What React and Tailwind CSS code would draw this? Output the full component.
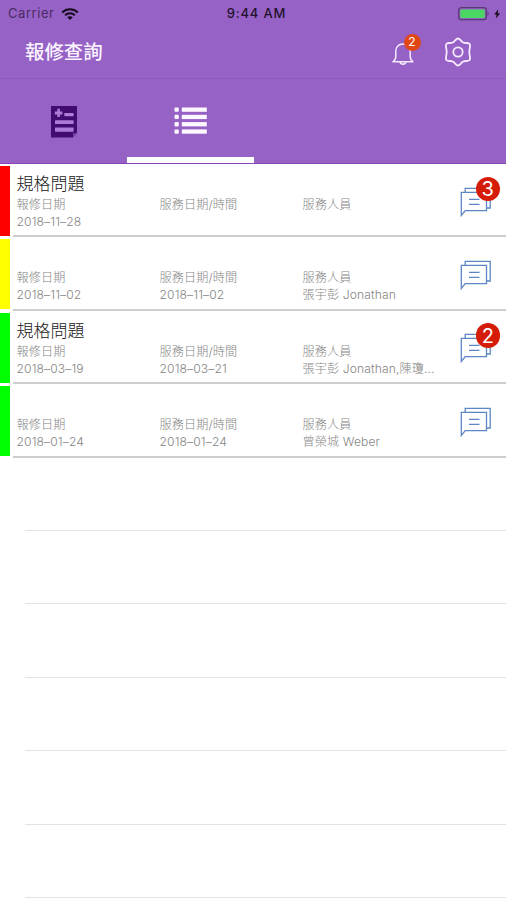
import React from 'react';
import clsx from 'clsx';

const tickets = [
  { color: 'bg-[#ff0000]', title: '規格問題', reported: '2018–11–28', served: '', staff: '', unread: 3 },
  { color: 'bg-[#ffff00]', title: '', reported: '2018–11–02', served: '2018–11–02', staff: '張宇彭 Jonathan', unread: 0 },
  { color: 'bg-[#00ff00]', title: '規格問題', reported: '2018–03–19', served: '2018–03–21', staff: '張宇彭 Jonathan,陳瓊...', unread: 2 },
  { color: 'bg-[#00ff00]', title: '', reported: '2018–01–24', served: '2018–01–24', staff: '曾榮城 Weber', unread: 0 },
];

const emptyRows = [1, 2, 3, 4, 5, 6];

const WifiIcon = () => (
  <svg width="18" height="12" viewBox="0 0 18 12" fill="none" stroke="#150b1e" strokeWidth="2">
    <path d="M1.2 4.4C5.6.3 12.4.3 16.8 4.4" />
    <path d="M4.1 7.3c2.8-2.6 7-2.6 9.8 0" />
    <path d="M6.2 9.3 9 12l2.8-2.7c-1.6-1.4-4-1.4-5.6 0z" fill="#150b1e" stroke="none" />
  </svg>
);

const BatteryIcon = () => (
  <svg width="44" height="14" viewBox="0 0 44 14">
    <rect x=".7" y=".7" width="27.6" height="12" rx="2.6" fill="none" stroke="#583a76" strokeWidth="1.3" />
    <rect x="2.3" y="2.4" width="24.4" height="8.7" rx="1" fill="#4bd763" />
    <path d="M29.5 4.6c1.6.7 1.6 3.6 0 4.3z" fill="#583a76" />
    <path d="M40.3 2.2 36.2 7.5h2.4l-.8 4 4.4-5.3h-2.6z" fill="#150b1e" />
  </svg>
);

const BellIcon = () => (
  <svg width="22" height="26" viewBox="0 0 22 26" fill="none" stroke="#f6e9ff" strokeWidth="1.5" strokeLinejoin="round">
    <path d="M1 21.8h20c-1.9-1.3-2.8-3-2.8-5.5v-5C18.200 7 15.200 4 11 4s-7.200 3-7.200 7.300v5c0 2.500-.9 4.200-2.800 5.500z" />
    <path d="M8.200 22.200c.5 2.800 5.100 2.800 5.600 0" />
  </svg>
);

const GearIcon = () => (
  <svg width="28" height="30" viewBox="0 0 28 30" fill="none" stroke="#f6e9ff" strokeWidth="1.8" strokeLinejoin="round">
    <path d="M14 1.500C16 1.500 17 4.400 19.200 5.500 21.300 6.600 23.700 5.400 25.300 6.600 27.200 8 25.300 11.500 25.300 15S27.200 22 25.300 23.400C23.700 24.600 21.300 23.400 19.200 24.500 17 25.600 16 28.500 14 28.500S11 25.600 8.800 24.500C6.700 23.400 4.300 24.600 2.700 23.400.8 22 2.700 18.500 2.700 15S.8 8 2.700 6.600C4.300 5.400 6.700 6.600 8.800 5.500 11 4.400 12 1.500 14 1.500z" />
    <circle cx="14" cy="15" r="4.700" />
  </svg>
);

const FormIcon = () => (
  <svg width="26" height="32" viewBox="0 0 26 32">
    <path d="M0 0h26v27.500h-4v4H0z" fill="#410b72" />
    <path d="M22 31.500v-4h4z" fill="#7441a2" />
    <g fill="#ad7cd6">
      <path d="M6.300 2.800h2.600v2.800h2.500v2.800H8.900v2.700H6.300V8.400H3.800V5.600h2.500z" />
      <rect x="13.300" y="7" width="9.300" height="3.200" rx=".6" />
      <rect x="4" y="14.200" width="18.600" height="3.800" rx=".6" />
      <rect x="4" y="21.500" width="18.600" height="4.200" rx=".6" />
    </g>
  </svg>
);

const ListIcon = () => (
  <svg width="33" height="28" viewBox="0 0 33 28" fill="#fdf8ff">
    {[0.5, 7.8, 15.1, 22.4].map((y) => (
      <g key={y}>
        <rect x="0.5" y={y} width="4.3" height="4.3" rx="1" />
        <rect x="7.8" y={y} width="25" height="4.3" />
      </g>
    ))}
  </svg>
);

const ChatIcon = () => (
  <svg width="32" height="30" viewBox="0 0 32 30" fill="none" stroke="#5c87c4" strokeWidth="1.3">
    <path d="M5.200 5V1.300h25V21h-3.400" />
    <path d="M1.300 28.500V5.300h25.200v18.400H5.200z" fill="#fff" />
    <path d="M9 12.300h10.500M9 17.300h10.500" />
  </svg>
);

const Field = ({ label, value, className }) => (
  <div className={clsx('h-full pt-[32px] text-[12.1px] leading-[17px] whitespace-nowrap text-[#858585]', className)}>
    <div className="tracking-[0.15px]">{label}</div>
    <div className="tracking-[0.13px]">{value}</div>
  </div>
);

const TicketRow = ({ ticket }) => (
  <li className="flex h-[73.4px]">
    <div className={clsx('mt-[2px] mb-[1.5px] w-[10px] shrink-0', ticket.color)} />
    <div className="relative ml-[3px] flex flex-1 border-b-2 border-[#cdcdcd] pl-[3.5px]">
      <h2 className="absolute top-[8px] left-[3.5px] text-[17px] leading-[24px] text-[#202020]">{ticket.title}</h2>
      <Field className="w-[143px]" label="報修日期" value={ticket.reported} />
      <Field className="w-[143px]" label="服務日期/時間" value={ticket.served} />
      <Field className="flex-1" label="服務人員" value={ticket.staff} />
      <div className="relative mt-[22.5px] mr-[14px] h-[30px] w-[32px]">
        <ChatIcon />
        {ticket.unread > 0 && (
          <span className="absolute -top-[10px] left-[15.5px] flex size-[24.5px] items-center justify-center rounded-full bg-[#d51c08] font-['Inter'] text-[20px] font-normal leading-none text-white">
            {ticket.unread}
          </span>
        )}
      </div>
    </div>
  </li>
);

function App() {
  return (
    <div className="h-[900px] w-[506px] overflow-hidden bg-white font-['Inter','Noto_Sans_CJK_TC',sans-serif] font-light">
      <header className="h-[164px] border-b border-[#8746b5] bg-[#9662c5]">
        <div className="grid h-[27px] grid-cols-3 items-center pr-[4px] pl-[8px] text-[13px] text-[#24122f]">
          <div className="flex items-center gap-[7px]">
            <span className="tracking-[0.55px] font-normal text-[#4a2c66]">Carrier</span>
            <WifiIcon />
          </div>
          <div className="pl-[3px] text-center font-medium tracking-[0.85px]">9:44 AM</div>
          <div className="flex justify-end">
            <BatteryIcon />
          </div>
        </div>
        <div className="flex h-[52px] items-center border-b border-[#8d59bb] pr-[34px] pl-[25px]">
          <h1 className="flex-1 pt-[1px] text-[19.4px] font-medium text-[#fbf3ff]">報修查詢</h1>
          <div className="relative mr-[30px]">
            <BellIcon />
            <span className="absolute -top-[6px] left-[11.5px] flex size-[17px] items-center justify-center rounded-full bg-[#e04714] text-[12px] font-normal leading-none text-white">
              2
            </span>
          </div>
          <div className="pb-[2px]">
            <GearIcon />
          </div>
        </div>
        <nav className="flex h-[84px]">
          <button className="flex w-[127px] justify-center pt-[27px]">
            <FormIcon />
          </button>
          <button className="flex w-[126.5px] justify-center border-b-[6px] border-white pt-[28px]">
            <ListIcon />
          </button>
        </nav>
      </header>
      <ul>
        {tickets.map((ticket) => (
          <TicketRow key={ticket.reported} ticket={ticket} />
        ))}
        {emptyRows.map((n) => (
          <li key={n} className="ml-[25px] h-[73.4px] border-b border-[#e2e2e2]" />
        ))}
      </ul>
    </div>
  );
}

export default App;
